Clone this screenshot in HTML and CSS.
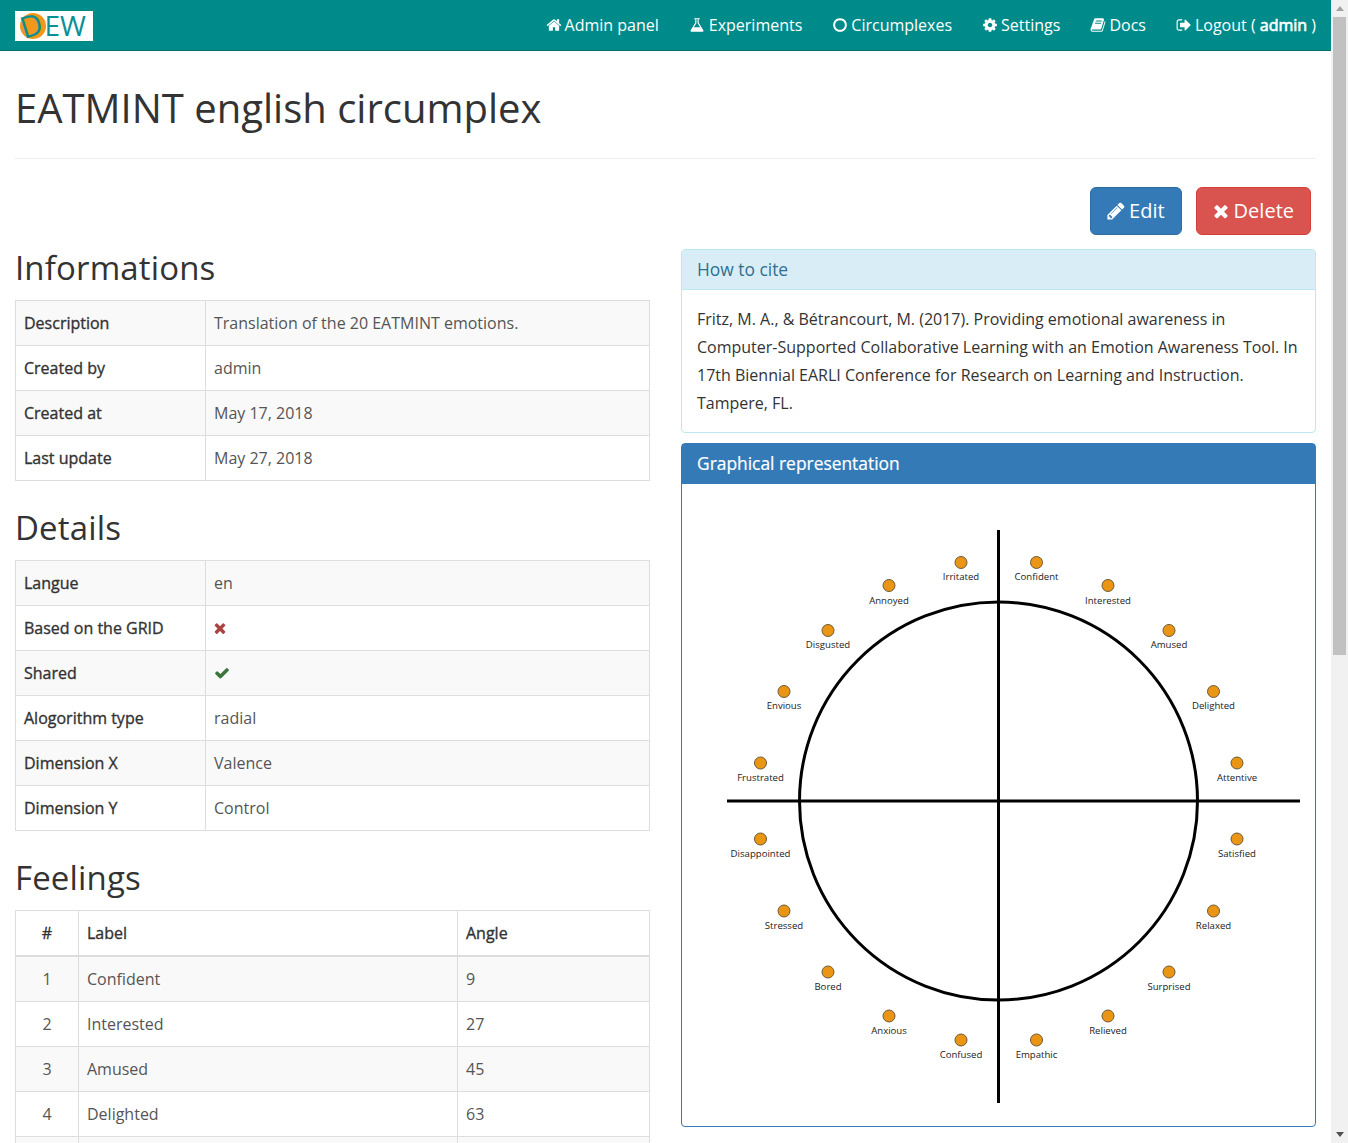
FILE: index.html
```html
<!DOCTYPE html>
<html lang="en">
<head>
    <meta charset="UTF-8">
    <title>EATMINT english circumplex</title>
    <link rel="stylesheet" href="styles.css">
</head>
<body>
<div class="page">
    <nav class="navbar">
        <a class="brand" href="#">
            <svg class="logo" viewBox="0 0 78 30">
                <circle cx="18" cy="15" r="13" fill="#f0971c"/>
                <text class="logo-d" x="0" y="0" transform="translate(9 28) rotate(-17)">D</text>
                <text class="logo-ew" x="29.500" y="24.500">EW</text>
            </svg>
        </a>
        <ul class="nav">
            <li><a href="#"><svg class="icon" viewBox="0 0 1792 1792"><path d="M1472 992v480q0 26-19 45t-45 19h-384v-384h-256v384h-384q-26 0-45-19t-19-45v-480q0-1 .5-3t.5-3l575-474 575 474q1 2 1 6zm223-69l-62 74q-8 9-21 11h-3q-13 0-21-7l-692-577-692 577q-12 8-24 7-13-2-21-11l-62-74q-8-10-7-23.5t11-21.5l719-599q32-26 76-26t76 26l244 204v-195q0-14 9-23t23-9h192q14 0 23 9t9 23v408l219 182q10 8 11 21.5t-7 23.5z"/></svg>Admin panel</a></li>
            <li><a href="#"><svg class="icon icon-flask" viewBox="0 0 1792 1792"><path d="M1591 1448q56 89 21.5 152.5t-140.5 63.5h-1152q-106 0-140.5-63.5t21.5-152.5l503-793v-399h-64q-26 0-45-19t-19-45 19-45 45-19h512q26 0 45 19t19 45-19 45-45 19h-64v399zm-779-725l-272 429h712l-272-429-20-31v-467h-128v467z"/></svg>Experiments</a></li>
            <li><a href="#"><svg class="icon" viewBox="0 0 1792 1792"><path d="M896 352q-148 0-273 73t-198 198-73 273 73 273 198 198 273 73 273-73 198-198 73-273-73-273-198-198-273-73zm768 544q0 209-103 385.5t-279.5 279.5-385.5 103-385.5-103-279.5-279.5-103-385.5 103-385.5 279.5-279.5 385.5-103 385.5 103 279.5 279.5 103 385.5z"/></svg>Circumplexes</a></li>
            <li><a href="#"><svg class="icon" viewBox="0 0 1792 1792"><path d="M1152 896q0-106-75-181t-181-75-181 75-75 181 75 181 181 75 181-75 75-181zm512-109v222q0 12-8 23t-20 13l-185 28q-19 54-39 91 35 50 107 138 10 12 10 25t-9 23q-27 37-99 108t-94 71q-12 0-26-9l-138-108q-44 23-91 38-16 136-29 186-7 28-36 28h-222q-14 0-24.5-8.5t-11.5-21.5l-28-184q-49-16-90-37l-141 107q-10 9-25 9-14 0-25-11-126-114-165-168-7-10-7-23 0-12 8-23 15-21 51-66.5t54-70.5q-27-50-41-99l-183-27q-13-2-21-12.5t-8-23.5v-222q0-12 8-23t19-13l186-28q14-46 39-92-40-57-107-138-10-12-10-24 0-10 9-23 26-36 98.5-107.5t94.5-71.5q13 0 26 10l138 107q44-23 91-38 16-136 29-186 7-28 36-28h222q14 0 24.5 8.5t11.5 21.5l28 184q49 16 90 37l142-107q9-9 24-9 13 0 25 10 129 119 165 170 7 8 7 22 0 12-8 23-15 21-51 66.5t-54 70.5q26 50 41 98l183 28q13 2 21 12.5t8 23.5z"/></svg>Settings</a></li>
            <li><a href="#"><svg class="icon" viewBox="0 0 1792 1792"><path d="M1703 478q40 57 18 129l-275 906q-19 64-76.5 107.5t-122.5 43.5h-923q-77 0-148.5-53.5t-99.5-131.5q-24-67-2-127 0-4 3-27t4-37q1-8-3-21.5t-3-19.5q2-11 8-21t16.5-23.5 16.5-23.5q23-38 45-91.5t30-91.5q3-10 .5-30t-.5-28q3-11 17-28t17-23q21-36 42-92t25-90q1-9-2.5-32t.5-28q4-13 22-30.5t22-22.5q19-26 42.5-84.5t27.5-96.5q1-8-3-25.5t-2-26.5q2-8 9-18t18-23 17-21q8-12 16.5-30.5t15-35 16-36 19.5-32 26.5-23.5 36-11.5 47.5 5.5l-1 3q38-9 51-9h761q74 0 114 56t18 130l-274 906q-36 119-71.5 153.5t-128.5 34.5h-869q-27 0-38 15-11 16-1 43 24 70 144 70h923q29 0 56-15.5t35-41.5l300-987q7-22 5-57 38 15 59 43zm-1064 2q-4 13 2 22.5t20 9.5h608q13 0 25.5-9.5t16.5-22.5l21-64q4-13-2-22.5t-20-9.5h-608q-13 0-25.5 9.5t-16.5 22.5zm-83 256q-4 13 2 22.5t20 9.5h608q13 0 25.5-9.5t16.5-22.5l21-64q4-13-2-22.5t-20-9.5h-608q-13 0-25.5 9.5t-16.5 22.5z"/></svg>Docs</a></li>
            <li><a href="#"><svg class="icon" viewBox="0 0 1792 1792"><path d="M704 1440q0 4 1 20t.5 26.5-3 23.5-10 19.5-20.5 6.5h-320q-119 0-203.5-84.5t-84.5-203.5v-704q0-119 84.5-203.5t203.5-84.5h320q13 0 22.5 9.5t9.5 22.5q0 4 1 20t.5 26.5-3 23.5-10 19.5-20.5 6.5h-320q-66 0-113 47t-47 113v704q0 66 47 113t113 47h312l11.5 1 11.5 3 8 5.5 7 9 2 13.5zm928-544q0 26-19 45l-544 544q-19 19-45 19t-45-19-19-45v-288h-448q-26 0-45-19t-19-45v-384q0-26 19-45t45-19h448v-288q0-26 19-45t45-19 45 19l544 544q19 19 19 45z"/></svg>Logout ( <b>admin</b> )</a></li>
        </ul>
    </nav>

    <main class="content">
        <h1 class="page-title">EATMINT english circumplex</h1>

        <div class="actions">
            <a class="btn btn-primary" href="#"><svg class="icon" viewBox="0 0 1792 1792"><path d="M491 1536l91-91-235-235-91 91v107h128v128h107zm523-928q0-22-22-22-10 0-17 7l-542 542q-7 7-7 17 0 22 22 22 10 0 17-7l542-542q7-7 7-17zm-54-192l416 416-832 832h-416v-416zm683 96q0 53-37 90l-166 166-416-416 166-165q36-38 90-38 53 0 91 38l235 234q37 39 37 91z"/></svg>Edit</a>
            <a class="btn btn-danger" href="#"><svg class="icon" viewBox="0 0 1792 1792"><path d="M1490 1322q0 40-28 68l-136 136q-28 28-68 28t-68-28l-294-294-294 294q-28 28-68 28t-68-28l-136-136q-28-28-28-68t28-68l294-294-294-294q-28-28-28-68t28-68l136-136q28-28 68-28t68 28l294 294 294-294q28-28 68-28t68 28l136 136q28 28 28 68t-28 68l-294 294 294 294q28 28 28 68z"/></svg>Delete</a>
        </div>

        <div class="columns">
            <section class="col-left">
                <h2>Informations</h2>
                <table class="table striped info">
                    <tr><th>Description</th><td>Translation of the 20 EATMINT emotions.</td></tr>
                    <tr><th>Created by</th><td>admin</td></tr>
                    <tr><th>Created at</th><td>May 17, 2018</td></tr>
                    <tr><th>Last update</th><td>May 27, 2018</td></tr>
                </table>

                <h2>Details</h2>
                <table class="table striped info">
                    <tr><th>Langue</th><td>en</td></tr>
                    <tr><th>Based on the GRID</th><td><svg class="flag flag-no" viewBox="0 0 1792 1792"><path d="M1490 1322q0 40-28 68l-136 136q-28 28-68 28t-68-28l-294-294-294 294q-28 28-68 28t-68-28l-136-136q-28-28-28-68t28-68l294-294-294-294q-28-28-28-68t28-68l136-136q28-28 68-28t68 28l294 294 294-294q28-28 68-28t68 28l136 136q28 28 28 68t-28 68l-294 294 294 294q28 28 28 68z"/></svg></td></tr>
                    <tr><th>Shared</th><td><svg class="flag flag-yes" viewBox="0 0 1792 1792"><path d="M1671 566q0 40-28 68l-724 724-136 136q-28 28-68 28t-68-28l-136-136-362-362q-28-28-28-68t28-68l136-136q28-28 68-28t68 28l294 295 656-657q28-28 68-28t68 28l136 136q28 28 28 68z"/></svg></td></tr>
                    <tr><th>Alogorithm type</th><td>radial</td></tr>
                    <tr><th>Dimension X</th><td>Valence</td></tr>
                    <tr><th>Dimension Y</th><td>Control</td></tr>
                </table>

                <h2>Feelings</h2>
                <table class="table feelings">
                    <thead>
                        <tr><th class="col-num">#</th><th class="col-label">Label</th><th>Angle</th></tr>
                    </thead>
                    <tbody>
                        <tr><td class="col-num">1</td><td>Confident</td><td>9</td></tr>
                        <tr><td class="col-num">2</td><td>Interested</td><td>27</td></tr>
                        <tr><td class="col-num">3</td><td>Amused</td><td>45</td></tr>
                        <tr><td class="col-num">4</td><td>Delighted</td><td>63</td></tr>
                        <tr><td class="col-num">&nbsp;</td><td></td><td></td></tr>
                    </tbody>
                </table>
            </section>

            <section class="col-right">
                <div class="panel panel-info">
                    <div class="panel-heading">How to cite</div>
                    <div class="panel-body">Fritz, M. A., &amp; Bétrancourt, M. (2017). Providing emotional awareness in Computer-Supported Collaborative Learning with an Emotion Awareness Tool. In 17th Biennial EARLI Conference for Research on Learning and Instruction. Tampere, FL.</div>
                </div>
                <div class="panel panel-primary">
                    <div class="panel-heading">Graphical representation</div>
                    <svg class="circumplex" viewBox="682 484 633 642">
                        <line class="axis" x1="727" y1="801" x2="1300" y2="801"/>
                        <line class="axis" x1="998.500" y1="530" x2="998.500" y2="1103"/>
                        <circle class="axis" cx="998.500" cy="801" r="199"/>
                        <g class="feeling"><circle cx="1036.500" cy="562.500" r="6"/><text x="1036.500" y="580">Confident</text></g>
                        <g class="feeling"><circle cx="1108" cy="585.500" r="6"/><text x="1108" y="604">Interested</text></g>
                        <g class="feeling"><circle cx="1169" cy="630.500" r="6"/><text x="1169" y="648">Amused</text></g>
                        <g class="feeling"><circle cx="1213.500" cy="691.500" r="6"/><text x="1213.500" y="709">Delighted</text></g>
                        <g class="feeling"><circle cx="1237" cy="763" r="6"/><text x="1237" y="781">Attentive</text></g>
                        <g class="feeling"><circle cx="1237" cy="839" r="6"/><text x="1237" y="857">Satisfied</text></g>
                        <g class="feeling"><circle cx="1213.500" cy="911" r="6"/><text x="1213.500" y="929">Relaxed</text></g>
                        <g class="feeling"><circle cx="1169" cy="972" r="6"/><text x="1169" y="990">Surprised</text></g>
                        <g class="feeling"><circle cx="1108" cy="1016" r="6"/><text x="1108" y="1034">Relieved</text></g>
                        <g class="feeling"><circle cx="1036.500" cy="1040" r="6"/><text x="1036.500" y="1058">Empathic</text></g>
                        <g class="feeling"><circle cx="961" cy="1040" r="6"/><text x="961" y="1058">Confused</text></g>
                        <g class="feeling"><circle cx="889" cy="1016" r="6"/><text x="889" y="1034">Anxious</text></g>
                        <g class="feeling"><circle cx="828" cy="972" r="6"/><text x="828" y="990">Bored</text></g>
                        <g class="feeling"><circle cx="784" cy="911" r="6"/><text x="784" y="929">Stressed</text></g>
                        <g class="feeling"><circle cx="760.500" cy="839" r="6"/><text x="760.500" y="857">Disappointed</text></g>
                        <g class="feeling"><circle cx="760.500" cy="763" r="6"/><text x="760.500" y="781">Frustrated</text></g>
                        <g class="feeling"><circle cx="784" cy="691.500" r="6"/><text x="784" y="709">Envious</text></g>
                        <g class="feeling"><circle cx="828" cy="630.500" r="6"/><text x="828" y="648">Disgusted</text></g>
                        <g class="feeling"><circle cx="889" cy="585.500" r="6"/><text x="889" y="604">Annoyed</text></g>
                        <g class="feeling"><circle cx="961" cy="562.500" r="6"/><text x="961" y="580">Irritated</text></g>
                    </svg>
                </div>
            </section>
        </div>
    </main>
</div>

<div class="scrollbar">
    <span class="arrow arrow-up"></span>
    <span class="thumb"></span>
    <span class="arrow arrow-down"></span>
</div>
</body>
</html>
```

FILE: styles.css
```css
html, body {
    margin: 0;
    padding: 0;
    height: 100%;
    overflow: hidden;
}

body {
    display: flex;
    font-family: "Open Sans", sans-serif;
    font-size: 16px;
    line-height: 28px;
    color: #333;
    background-color: #fff;
}

a {
    color: inherit;
    text-decoration: none;
}

.page {
    flex: 1;
    min-width: 0;
    height: 100%;
    overflow: hidden;
}

/* navbar */
.navbar {
    display: flex;
    align-items: center;
    justify-content: space-between;
    height: 50px;
    padding: 0 15px;
    background-color: #008b8b;
    border-bottom: 1px solid #006f6f;
}

.brand {
    display: flex;
    margin-top: 2px;
}

.logo {
    width: 78px;
    height: 30px;
    overflow: visible;
    background-color: #fff;
}

.logo-d {
    font-family: "Open Sans", sans-serif;
    font-size: 30px;
    font-weight: 400;
    fill: #0b8f95;
}

.logo-ew {
    font-family: "Open Sans", sans-serif;
    font-size: 28px;
    font-weight: 400;
    fill: #0b8f95;
}

.nav {
    display: flex;
    gap: 30px;
    margin: 0;
    padding: 0;
    list-style-type: none;
    color: #fff;
}

.nav a {
    display: flex;
    align-items: center;
    white-space: pre;
}

.nav b {
    font-weight: 400;
    -webkit-text-stroke: 0.6px currentColor;
}

.icon {
    width: 16px;
    height: 16px;
    margin-right: 3px;
    fill: currentColor;
}

.icon-flask {
    margin-right: 4px;
}

/* main */
.content {
    padding: 0 15px;
}

.page-title {
    margin: 0;
    padding: 28px 0 22px;
    font-size: 40px;
    font-weight: 400;
    line-height: 57px;
    border-bottom: 1px solid #eee;
}

.actions {
    display: flex;
    justify-content: flex-end;
    gap: 14px;
    margin: 28px 5px 14px 0;
}

.btn {
    display: flex;
    align-items: center;
    height: 48px;
    box-sizing: border-box;
    padding: 0 16px;
    font-size: 20px;
    color: #fff;
    border: 1px solid;
    border-radius: 6px;
}

.btn .icon {
    width: 20px;
    height: 20px;
}

.btn-primary {
    padding-left: 15px;
    background-color: #337ab7;
    border-color: #2e6da4;
}

.btn-danger {
    padding-left: 14px;
    background-color: #d9534f;
    border-color: #d43f3a;
}

.columns {
    display: grid;
    grid-template-columns: 1fr 1fr;
    column-gap: 31px;
}

h2 {
    margin: 0 0 13px;
    font-size: 33px;
    font-weight: 400;
    line-height: 38px;
    letter-spacing: 0.15px;
}

/* tables */
.table {
    width: 100%;
    margin-bottom: 28px;
    table-layout: fixed;
    border-collapse: collapse;
    border: 1px solid #ddd;
}

.table th,
.table td {
    padding: 8px;
    text-align: left;
    border: 1px solid #ddd;
}

.table th {
    font-weight: 400;
    -webkit-text-stroke: 0.35px currentColor;
}

.table td {
    color: #555;
}

.striped tr:nth-child(odd),
.feelings tbody tr:nth-child(odd) {
    background-color: #f9f9f9;
}

.info th {
    width: 173px;
}

.feelings thead th {
    border-bottom-width: 2px;
}

.feelings .col-num {
    width: 46px;
    text-align: center;
}

.feelings .col-label {
    width: 362px;
}

.flag {
    display: block;
    width: 16px;
    height: 16px;
}

.flag-no {
    margin-left: -2px;
    fill: #a94442;
}

.flag-yes {
    fill: #3c763d;
}

/* panels */
.panel {
    margin-bottom: 10px;
    border: 1px solid;
    border-radius: 4px;
}

.panel-heading {
    height: 40px;
    padding: 0 15px;
    box-sizing: border-box;
    font-size: 17.4px;
    line-height: 38px;
}

.panel-body {
    padding: 15px;
}

.panel-info {
    border-color: #bce8f1;
}

.panel-info .panel-heading {
    color: #31708f;
    background-color: #d9edf7;
    border-bottom: 1px solid #bce8f1;
}

.panel-primary {
    border-color: #337ab7;
}

.panel-primary .panel-heading {
    color: #fff;
    background-color: #337ab7;
    -webkit-text-stroke: 0.2px currentColor;
}

/* diagram */
.circumplex {
    display: block;
    width: 100%;
    height: 642px;
}

.axis {
    fill: none;
    stroke: #000;
    stroke-width: 3;
}

.feeling circle {
    fill: #ea9514;
    stroke: #6b5a3a;
    stroke-width: 1;
}

.feeling text {
    font-family: "Open Sans", sans-serif;
    font-size: 9.6px;
    text-anchor: middle;
    fill: #222;
}

/* scrollbar */
.scrollbar {
    display: flex;
    flex-direction: column;
    align-items: center;
    flex: none;
    width: 17px;
    height: 100%;
    background-color: #f1f1f1;
}

.thumb {
    width: 13px;
    height: 638px;
    background-color: #c1c1c1;
}

.arrow {
    width: 0;
    height: 0;
    border-left: 4px solid transparent;
    border-right: 4px solid transparent;
}

.arrow-up {
    margin: 6px 0 6px;
    border-bottom: 5px solid #a3a3a3;
}

.arrow-down {
    margin-top: auto;
    margin-bottom: 6px;
    border-top: 5px solid #505050;
}
```
